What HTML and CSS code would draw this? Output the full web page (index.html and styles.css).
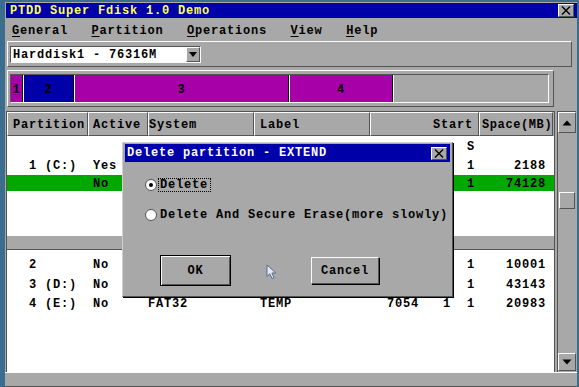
FILE: index.html
```html
<!DOCTYPE html>
<html>

<head>
    <title>PTDD Super Fdisk 1.0 Demo</title>
    <meta charset="utf-8">
    <link rel="stylesheet" href="styles.css">
</head>

<body>

    <div class="window">
        <div class="titlebar">
            <span class="title">PTDD Super Fdisk 1.0 Demo</span>
            <span class="closebtn">
                <svg width="10" height="9" viewBox="0 0 10 9"><path d="M1 0.5 L9 8.5 M9 0.5 L1 8.5" stroke="#000" stroke-width="1.4" /></svg>
            </span>
        </div>

        <div class="menubar">
            <span><u>G</u>eneral</span>
            <span><u>P</u>artition</span>
            <span><u>O</u>perations</span>
            <span><u>V</u>iew</span>
            <span><u>H</u>elp</span>
        </div>

        <div class="diskbar">
            <div class="combo">
                <span class="combo-text">Harddisk1 - 76316M</span>
                <span class="combo-btn">
                    <svg width="10" height="8" viewBox="0 0 10 8"><path d="M1 1 L9 1 L5 6 Z" fill="#000" /></svg>
                </span>
            </div>
        </div>

        <div class="partmap">
            <div class="segs">
                
                <div class="seg magenta" style="width:12px">1</div>
                <div class="seg blue" style="width:51px">2</div>
                <div class="seg magenta" style="width:215px">3</div>
                <div class="seg magenta" style="width:104px">4</div>
                <div class="seg free"></div>
            </div>
        </div>

        <div class="main">
            <div class="table">
                <div class="thead cols">
                    <div class="th">Partition</div>
                    <div class="th">Active</div>
                    <div class="th">System</div>
                    <div class="th">Label</div>
                    <div class="th">Start</div>
                    <div class="th space">Space(MB)</div>
                </div>
                <div class="tbody">
                    <div class="row cols first">
                        <div></div><div></div><div></div><div></div><div>S</div><div></div>
                    </div>
                    <div class="row cols tall">
                        <div>1 (C:)</div><div>Yes</div><div></div><div></div><div>1</div><div>2188</div>
                    </div>
                    <div class="row cols sel">
                        <div></div><div>No</div><div></div><div></div><div>1</div><div>74128</div>
                    </div>
                    <div class="band"></div>
                    <div class="lower">
                        <div class="row cols">
                            <div>2</div><div>No</div><div></div><div></div><div>1</div><div>10001</div>
                        </div>
                        <div class="row cols">
                            <div>3 (D:)</div><div>No</div><div></div><div></div><div>1</div><div>43143</div>
                        </div>
                        <div class="row cols">
                            <div>4 (E:)</div><div>No</div><div>FAT32</div><div>TEMP</div><div>7054   1  1</div><div>20983</div>
                        </div>
                    </div>
                </div>
            </div>

            <div class="scrollbar">
                <div class="sbtn">
                    <svg width="10" height="6" viewBox="0 0 10 6"><path d="M0.5 5.5 L9.5 5.5 L5 0.5 Z" fill="#000" /></svg>
                </div>
                <div class="thumb"></div>
                <div class="sbtn down">
                    <svg width="10" height="6" viewBox="0 0 10 6"><path d="M0.5 0.5 L9.5 0.5 L5 5.5 Z" fill="#000" /></svg>
                </div>
            </div>
        </div>

        <div class="statusbar"></div>
    </div>

    <!-- modal dialog over the partition list -->
    <div class="dialog">
        <div class="dlg-title">
            <span>Delete partition - EXTEND</span>
            <span class="closebtn">
                <svg width="10" height="9" viewBox="0 0 10 9"><path d="M1 0.5 L9 8.5 M9 0.5 L1 8.5" stroke="#000" stroke-width="1.4" /></svg>
            </span>
        </div>
        <div class="dlg-body">
            <div class="opt">
                <span class="radio on"></span>
                <span class="opt-label focus">Delete</span>
            </div>
            <div class="opt second">
                <span class="radio"></span>
                <span class="opt-label">Delete And Secure Erase(more slowly)</span>
            </div>
            <div class="buttons">
                <div class="btn ok">OK</div>
                <div class="btn cancel">Cancel</div>
            </div>
        </div>
    </div>

    <svg class="cursor" width="12" height="16" viewBox="0 0 12 16">
        <path d="M1 1 L1 12.5 L3.8 9.8 L6 14.5 L8 13.6 L5.9 9 L9.8 9 Z" fill="#e4e9f2" stroke="#5a6a88" stroke-width="1" />
    </svg>

</body>

</html>
```

FILE: styles.css
```css
* {
    box-sizing: border-box;
}

html,
body {
    margin: 0;
}

body {
    width: 579px;
    height: 387px;
    overflow: hidden;
    padding: 2px 2px 0 5px;
    background-color: #3b6e8e;
    font-family: "Liberation Mono", "DejaVu Sans Mono", monospace;
    font-weight: bold;
    font-size: 12px;
    letter-spacing: 0.8px;
    color: #000;
}

.window {
    width: 572px;
    height: 385px;
    padding-top: 1px;
    background-color: #a8a8a8;
    display: flex;
    flex-direction: column;
}

/* title bar */
.titlebar {
    height: 15px;
    margin-left: 1px;
    padding-left: 4px;
    background-color: #0000a8;
    color: #ffff54;
    display: flex;
    align-items: center;
    justify-content: space-between;
}

.closebtn {
    width: 16px;
    height: 13px;
    margin-right: 3px;
    background-color: #a8a8a8;
    border-top: 1px solid #fcfcfc;
    border-left: 1px solid #fcfcfc;
    border-right: 1px solid #545454;
    border-bottom: 1px solid #545454;
    display: flex;
    align-items: center;
    justify-content: center;
}

/* menu */
.menubar {
    height: 23px;
    padding-left: 7px;
    padding-top: 2px;
    display: flex;
    align-items: center;
    gap: 23.5px;
}

.menubar u {
    text-underline-offset: 2px;
}

/* disk selector */
.diskbar {
    height: 26px;
    margin: 0 5px 0 2px;
    padding: 4px 0 0 2px;
    border-top: 1px solid #fcfcfc;
    border-left: 1px solid #fcfcfc;
    border-bottom: 1px solid #545454;
    border-right: 1px solid #545454;
}

.combo {
    width: 191px;
    height: 17px;
    display: flex;
    border-top: 1px solid #545454;
    border-left: 1px solid #545454;
    border-bottom: 1px solid #fcfcfc;
    border-right: 1px solid #fcfcfc;
}

.combo-text {
    flex: 1;
    padding-left: 2px;
    line-height: 16px;
    background-color: #fff;
}

.combo-btn {
    width: 14px;
    border-top: 1px solid #fcfcfc;
    border-left: 1px solid #fcfcfc;
    border-bottom: 1px solid #545454;
    border-right: 1px solid #545454;
    display: flex;
    align-items: center;
    justify-content: center;
}

/* partition map */
.partmap {
    height: 37px;
    margin: 3px 23px 0 2px;
    padding: 3px 4px 3px 2px;
    border-top: 1px solid #fcfcfc;
    border-left: 1px solid #fcfcfc;
    border-bottom: 1px solid #545454;
    border-right: 1px solid #545454;
}

.segs {
    height: 29px;
    display: flex;
    border-top: 1px solid #545454;
    border-left: 1px solid #545454;
    border-bottom: 1px solid #fcfcfc;
    border-right: 1px solid #fcfcfc;
}

.seg {
    height: 27px;
    padding-top: 3px;
    line-height: 24px;
    text-align: center;
    border-left: 1px solid #fcfcfc;
    border-right: 1px solid #000;
}

.seg:first-child {
    border-left: none;
}

.magenta {
    background-color: #a800a8;
}

.blue {
    background-color: #0000a8;
}

.free {
    flex: 1;
    background-color: #a8a8a8;
    border-right: none;
}

/* partition list */
.main {
    flex: 1;
    margin-top: 4px;
    display: flex;
}

.table {
    width: 549px;
    margin-left: 1px;
    border-left: 1px solid #545454;
    border-top: 1px solid #545454;
    border-right: 1px solid #545454;
    display: flex;
    flex-direction: column;
}

.cols {
    display: grid;
    grid-template-columns: 81px 60px 106px 116px 109px 74px;
}

.th {
    height: 24px;
    padding-top: 2px;
    line-height: 20px;
    white-space: nowrap;
    overflow: hidden;
    border-top: 1px solid #fcfcfc;
    border-left: 1px solid #fcfcfc;
    border-right: 1px solid #545454;
    border-bottom: 1px solid #545454;
}

.th:nth-child(1) { padding-left: 5px; }
.th:nth-child(2) { padding-left: 4px; }
.th:nth-child(3) { padding-left: 0; }
.th:nth-child(4) { padding-left: 5px; }
.th:nth-child(5) { text-align: right; padding-right: 5px; }

.th.space {
    padding-left: 2px;
    letter-spacing: 0.6px;
}

.tbody {
    flex: 1;
    background-color: #fff;
}

.row {
    height: 19.5px;
    line-height: 19.5px;
    white-space: pre;
}

.row > div {
    padding-top: 2px;
}

.row > div:nth-child(1) { padding-left: 22px; }
.row > div:nth-child(2) { padding-left: 5px; }
.row > div:nth-child(4) { padding-left: 6px; }
.row > div:nth-child(5) { text-align: right; padding-right: 4px; }
.row > div:nth-child(6) { text-align: right; padding-right: 7px; }

.row.first {
    height: 18px;
    line-height: 18px;
}

.row.tall {
    height: 20px;
    line-height: 20px;
}

.row.sel {
    height: 16px;
    line-height: 14px;
    margin-top: 1px;
    background-color: #00a800;
}

.band {
    height: 14px;
    margin-top: 45px;
    background-color: #a8a8a8;
    border-bottom: 1px solid #545454;
}

.lower {
    padding-top: 4px;
}

/* scrollbar */
.scrollbar {
    width: 19px;
    margin-left: 2px;
    border-left: 1px solid #545454;
    border-top: 1px solid #545454;
    display: flex;
    flex-direction: column;
    align-items: center;
}

.sbtn {
    width: 18px;
    height: 21px;
    border-top: 1px solid #fcfcfc;
    border-left: 1px solid #fcfcfc;
    border-bottom: 1px solid #545454;
    border-right: 1px solid #545454;
    display: flex;
    align-items: center;
    justify-content: center;
}

.sbtn.down {
    height: 18px;
    margin-top: auto;
    margin-bottom: 1px;
}

.thumb {
    width: 16px;
    height: 17px;
    margin-top: 59px;
    border-top: 1px solid #fcfcfc;
    border-left: 1px solid #fcfcfc;
    border-bottom: 1px solid #545454;
    border-right: 1px solid #545454;
}

.statusbar {
    height: 15px;
    border-top: 1px solid #fcfcfc;
    border-bottom: 1px solid #545454;
}

/* dialog */
.dialog {
    position: absolute;
    left: 122px;
    top: 142px;
    width: 331px;
    height: 155px;
    background-color: #a8a8a8;
    border-top: 1px solid #d0d0d0;
    border-left: 1px solid #d0d0d0;
    border-bottom: 1px solid #545454;
    border-right: 1px solid #545454;
    box-shadow: 1px 1px 0 #000;
}

.dlg-title {
    height: 18px;
    margin: 1px 2px 0;
    padding-left: 2px;
    background-color: #0000a8;
    color: #fcfcfc;
    display: flex;
    align-items: center;
    justify-content: space-between;
}

.dlg-body {
    padding-left: 22px;
}

.opt {
    height: 14px;
    margin-top: 16px;
    display: flex;
    align-items: center;
}

.radio {
    width: 12px;
    height: 12px;
    border-radius: 50%;
    background-color: #fff;
    border: 1px solid #545454;
    display: flex;
    align-items: center;
    justify-content: center;
}

.radio.on::after {
    content: "";
    width: 4px;
    height: 4px;
    border-radius: 50%;
    background-color: #000;
}

.opt-label {
    margin-left: 3px;
    line-height: 12px;
}

.opt-label.focus {
    margin-left: 1px;
    padding: 0 2px 0 1px;
    border: 1px dotted #000;
}

.buttons {
    margin-top: 33px;
    padding-left: 15px;
    display: flex;
    align-items: center;
}

.btn {
    display: flex;
    align-items: center;
    justify-content: center;
}

.btn.ok {
    width: 71px;
    height: 31px;
    border: 1px solid #000;
    box-shadow: inset 1px 1px 0 #fcfcfc, inset -1px -1px 0 #545454;
}

.btn.cancel {
    width: 68px;
    height: 27px;
    margin-left: 80px;
    border-top: 1px solid #fcfcfc;
    border-left: 1px solid #fcfcfc;
    border-bottom: 1px solid #545454;
    border-right: 1px solid #545454;
    box-shadow: 1px 1px 0 #000;
}

.cursor {
    position: absolute;
    left: 266px;
    top: 264px;
}
```
